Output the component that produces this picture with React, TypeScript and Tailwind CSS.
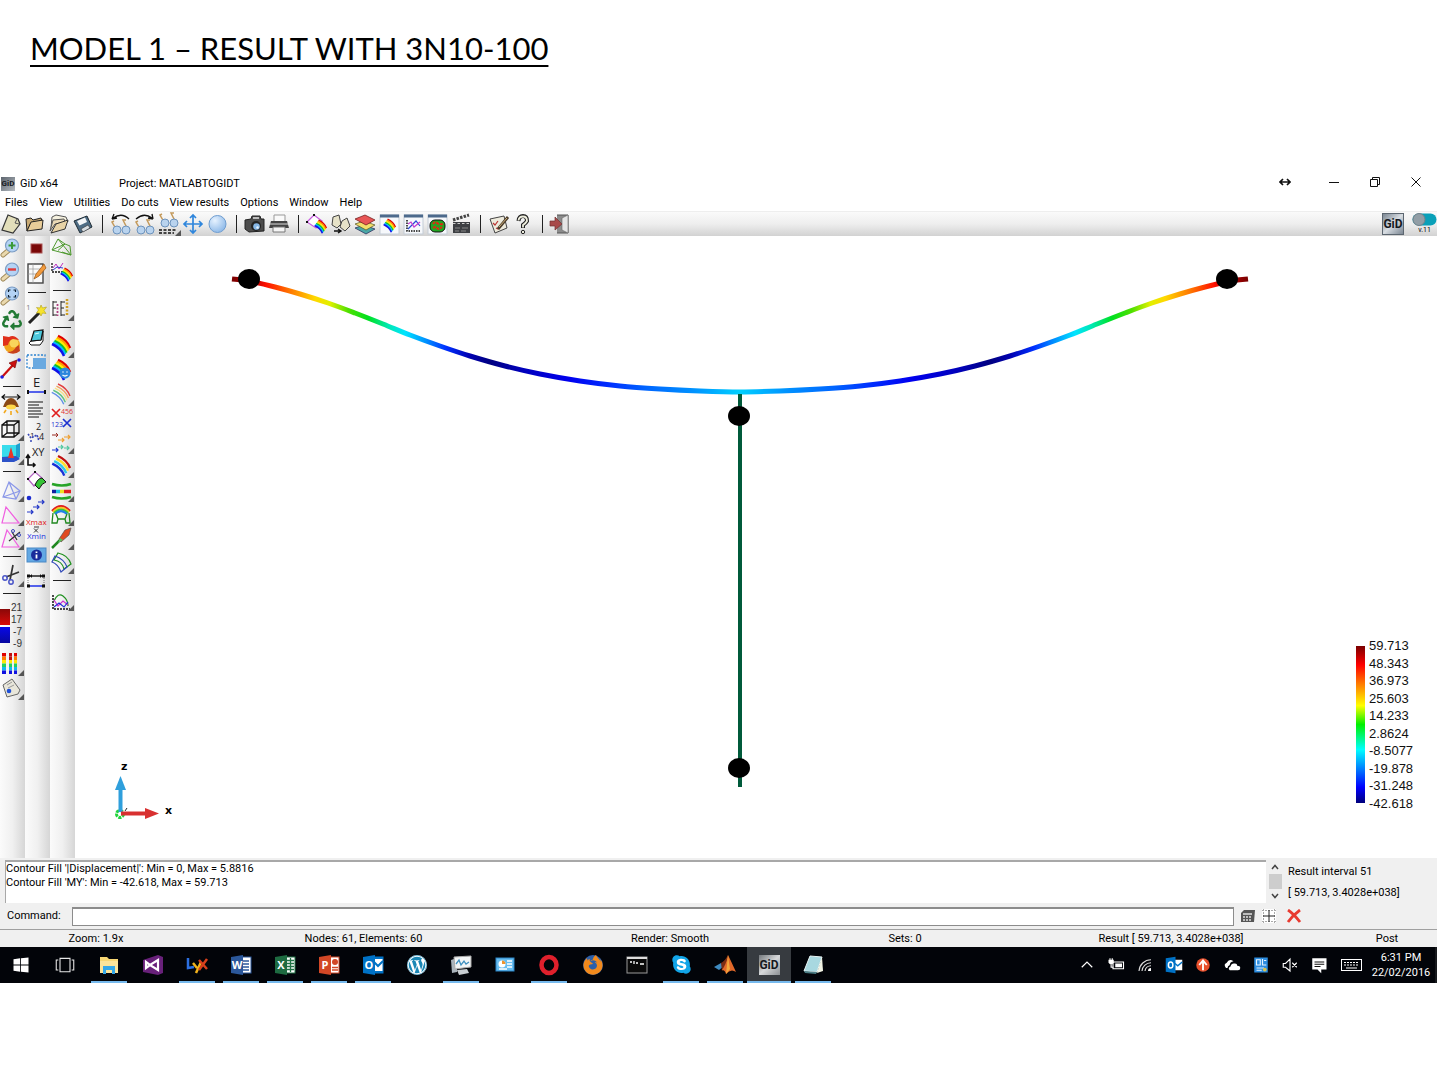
import type { ReactNode } from 'react'
import clsx from 'clsx'
import { FaRecycle, FaSkype, FaWordpress, FaFirefoxBrowser } from 'react-icons/fa'

type Tool = { name: string; icon: ReactNode; more?: boolean } | 'sep'

const RAINBOW = ['#e00000', '#ff9d00', '#ffee00', '#12c020', '#00b8ff', '#1010e8']

function Svg({ children, size = 24 }: { children: ReactNode; size?: number }) {
  return (
    <svg width={size} height={size} viewBox="0 0 24 24" fill="none" aria-hidden="true">
      {children}
    </svg>
  )
}

// Diagonal band of parallel arcs, outer colour first
function Rainbow({ step = 2, colors = RAINBOW }: { step?: number; colors?: string[] }) {
  return (
    <>
      {colors.map((c, i) => {
        const d = i * step
        return (
          <path
            key={i}
            d={`M${10 - d * 0.6} ${2 + d * 0.8} q9 4 12 12`}
            stroke={c}
            strokeWidth={step > 3 ? 2.4 : step > 2 ? 1.4 : 2.5}
          />
        )
      })}
    </>
  )
}

function Glasses({ y = 0 }: { y?: number }) {
  return (
    <g transform={`translate(0 ${y})`}>
      <path d="M7 17 L3 10 L5 9 M18 16 L14 8 L17 8" stroke="#c49a5c" strokeWidth="1.5" />
      <circle cx="8" cy="18" r="4" fill="#b9d3ee" stroke="#6d93bd" />
      <circle cx="17" cy="18" r="4" fill="#b9d3ee" stroke="#6d93bd" />
    </g>
  )
}

function Lens({ children }: { children: ReactNode }) {
  return (
    <Svg>
      <path d="M9 14 L3 19" stroke="#a08a5a" strokeWidth="5" strokeLinecap="round" />
      <path d="M9 14 L3 19" stroke="#ead9ae" strokeWidth="3" strokeLinecap="round" />
      <circle cx="12" cy="9.5" r="6.5" fill="#b4d3f5" stroke="#7b9cc4" strokeWidth="1.2" />
      {children}
    </Svg>
  )
}

function Glyph({ x, y, size = 8, fill, children }: { x: number; y: number; size?: number; fill: string; children: string }) {
  return (
    <text x={x} y={y} fontFamily="Open Sans, sans-serif" fontSize={size} fill={fill}>
      {children}
    </text>
  )
}

function GidLogo({ className }: { className: string }) {
  return (
    <span className={clsx('flex items-center justify-center font-["Roboto"] font-bold text-[#15191e]', className)}>
      GiD
    </span>
  )
}

const Pane = ({ children }: { children: ReactNode }) => (
  <Svg>
    <rect x="3" y="3" width="19" height="19" fill="#f6f8fb" stroke="#c3ccd6" />
    <rect x="3" y="2.5" width="19" height="3" fill="#4d6a8c" />
    {children}
  </Svg>
)

const topTools: Tool[] = [
  {
    name: 'New',
    icon: (
      <Svg>
        <path d="M9 3 L19 7 L21 12 L14 21 L3 18 Z" fill="#e2deba" stroke="#333" strokeWidth="1.2" />
        <path d="M18 7 L16 11 L20 12" stroke="#555" />
      </Svg>
    ),
  },
  {
    name: 'Open',
    icon: (
      <Svg>
        <path d="M4 19 L3 7 L8 6 L10 8 L18 6 L19 9 L8 11 Z" fill="#c9aa74" stroke="#222" />
        <path d="M4 19 L8 10 L20 8 L19 17 Z" fill="#e8cc98" stroke="#222" />
      </Svg>
    ),
  },
  {
    name: 'Import',
    icon: (
      <Svg>
        <path d="M4 16 L5 5 L9 3 L19 5 L21 10" fill="#f5f1df" stroke="#555" />
        <path d="M3 19 L6 8 L17 7 L18 10 L8 12 Z" fill="#ead9b5" stroke="#555" />
        <path d="M4 21 L9 12 L21 8 L18 17 Z" fill="#e8d3a6" stroke="#333" />
      </Svg>
    ),
  },
  {
    name: 'Save',
    icon: (
      <Svg>
        <path d="M3 9 L16 4 L21 15 L9 21 Z" fill="#4e6c84" stroke="#1d2a33" />
        <path d="M6 9 L14 5.500 L16 10 L8.500 13.500 Z" fill="#f4f6f8" />
        <path d="M10 17 L17 13 L19 16 L12 20 Z" fill="#d7dde2" stroke="#333" strokeWidth=".6" />
      </Svg>
    ),
  },
  'sep',
  {
    name: 'Undo view',
    icon: (
      <Svg>
        <Glasses />
        <path d="M4 6 Q13 0 20 7 M3 7 L5 2 M3 7 L8 6" stroke="#111" strokeWidth="1.3" />
      </Svg>
    ),
  },
  {
    name: 'Redo view',
    icon: (
      <Svg>
        <Glasses />
        <path d="M3 7 Q11 0 19 6 M20 7 L19 2 M20 7 L15 6" stroke="#111" strokeWidth="1.3" />
      </Svg>
    ),
  },
  {
    name: 'Saved views',
    more: true,
    icon: (
      <Svg>
        <Glasses y={-7} />
        <path d="M2 18 h18 M2 21 h15" stroke="#111" strokeDasharray="3 1.500" strokeWidth="1.3" />
      </Svg>
    ),
  },
  {
    name: 'Pan',
    icon: (
      <Svg>
        <path
          d="M12 3 V21 M3 12 H21 M9 6 L12 3 L15 6 M9 18 L12 21 L15 18 M6 9 L3 12 L6 15 M18 9 L21 12 L18 15"
          stroke="#2f86dc"
          strokeWidth="1.7"
        />
      </Svg>
    ),
  },
  {
    name: 'Render',
    icon: (
      <Svg>
        <defs>
          <radialGradient id="ball" cx=".35" cy=".3" r=".8">
            <stop offset="0" stopColor="#e6f2ff" />
            <stop offset="1" stopColor="#86b4e6" />
          </radialGradient>
        </defs>
        <circle cx="12.500" cy="12" r="8.500" fill="url(#ball)" stroke="#6f9dd0" />
      </Svg>
    ),
  },
  'sep',
  {
    name: 'Snapshot',
    icon: (
      <Svg>
        <path d="M2 8 L8 7 L9 4 H17 L18 7 H21 V19 L6 20 L2 17 Z" fill="#4c4c4c" stroke="#222" />
        <rect x="10" y="5" width="6" height="2" fill="#bbb" />
        <circle cx="13" cy="14" r="5" fill="#222" />
        <circle cx="13.500" cy="14.500" r="3.300" fill="#86b7e6" />
        <circle cx="14.500" cy="15.500" r="1.200" fill="#e6f4ff" />
      </Svg>
    ),
  },
  {
    name: 'Print',
    icon: (
      <Svg>
        <path d="M7 3 H18 V10 H7 Z" fill="#fafafa" stroke="#999" />
        <path d="M4 9 H20 L22 16 H2 Z" fill="#444" />
        <path d="M3 12 H21" stroke="#ddd" />
        <path d="M6 15 H18 V20 H6 Z" fill="#f5f5f5" stroke="#777" />
      </Svg>
    ),
  },
  'sep',
  {
    name: 'Postprocess',
    icon: (
      <Svg>
        <path d="M2 10 L9 3 L17 9 L11 16 Z" fill="#fff" stroke="#c75be0" strokeWidth="1.3" />
        <path d="M8 2 h2 v2 h-2z M1 9 h2 v2 h-2z" fill="#111" />
        <g transform="translate(7 7) scale(.65)">
          <Rainbow />
        </g>
      </Svg>
    ),
  },
  {
    name: 'Copy mesh',
    icon: (
      <Svg>
        <path d="M4 5 L10 3 L12 12 L8 16 L3 13 Z" fill="#e6e2c8" stroke="#444" />
        <path d="M13 9 L18 6 L21 14 L16 19 L11 15 Z" fill="#e6e2c8" stroke="#444" />
        <path d="M5 19 h6 M9 17 l3 2 l-3 2" stroke="#111" strokeWidth="1.4" />
      </Svg>
    ),
  },
  {
    name: 'Layers',
    icon: (
      <Svg>
        <path d="M2 16 L11 13 L22 17 L13 22 Z" fill="#4aa6a6" stroke="#225" strokeWidth=".7" />
        <path d="M2 12 L11 9 L22 13 L13 18 Z" fill="#f2de6a" stroke="#552" strokeWidth=".7" />
        <path d="M2 7 L12 3 L22 8 L13 13 Z" fill="#e85555" stroke="#611" strokeWidth=".7" />
      </Svg>
    ),
  },
  {
    name: 'Contour window',
    icon: (
      <Pane>
        <g transform="translate(4 6) scale(.65)">
          <Rainbow />
        </g>
      </Pane>
    ),
  },
  {
    name: 'Graph window',
    icon: (
      <Pane>
        <path d="M6 8 V19 H20" stroke="#111" strokeDasharray="1.500 1" strokeWidth="1.500" />
        <path d="M7 17 L12 12 L15 9 L19 14" stroke="#2a48d8" strokeWidth="1.200" />
        <path d="M7 12 L10 10 L13 15 L19 10" stroke="#c63bd0" strokeWidth="1.200" />
      </Pane>
    ),
  },
  {
    name: 'Result window',
    icon: (
      <Pane>
        <rect x="5" y="8" width="15" height="12" rx="5" fill="#22a522" stroke="#111" />
        <path d="M8 12 q2 -3 4 -1 t6 1 M8 16 q3 -2 4 0 t5 -1" stroke="#e02a10" strokeWidth="2" strokeDasharray="3 1" />
      </Pane>
    ),
  },
  {
    name: 'Animate',
    icon: (
      <Svg>
        <path d="M4 10 H21 V21 H4 Z" fill="#3d3f43" />
        <path d="M4 8 L20 3" stroke="#444" strokeWidth="3" strokeDasharray="2.500 1.200" />
        <path d="M4 11.500 H21" stroke="#ccc" strokeDasharray="2.500 2" />
        <path d="M6 16 h5 M13 16 h6 M6 19 h4 M12 19 h5" stroke="#888" />
      </Svg>
    ),
  },
  'sep',
  {
    name: 'Preferences',
    icon: (
      <Svg>
        <path d="M3 7 L17 4 L20 16 L8 21 Z" fill="#eeebdd" stroke="#444" />
        <path d="M6 11 l2 2 l3 -4 M9 16 l2 1 l2 -3" stroke="#b33" strokeWidth="1.200" />
        <path d="M21 5 L11 17" stroke="#4b3c2a" strokeWidth="2.800" />
        <path d="M20 6 L12 15" stroke="#cfb27c" strokeWidth="1" />
      </Svg>
    ),
  },
  {
    name: 'Help',
    icon: (
      <Svg>
        <path d="M7.500 9 Q8 4 12 4 T16 9 Q15 11 12 13 V16" stroke="#222" strokeWidth="4" />
        <path d="M7.500 8.500 Q8 4.500 12 4.500 T16 9 Q15 11 12 13 V15.500" stroke="#eeeede" strokeWidth="1.800" />
        <circle cx="12" cy="20" r="1.700" fill="#eeeede" stroke="#222" />
      </Svg>
    ),
  },
  'sep',
  {
    name: 'Exit',
    icon: (
      <Svg>
        <path d="M8 3 H19 V21 H8" fill="#8b8b8b" stroke="#555" />
        <path d="M13 6 L19 3 V21 L13 18 Z" fill="#e5e5e5" stroke="#666" strokeWidth=".6" />
        <path d="M1 9 H6 V5 L13 12 L6 18 V14 H1 Z" fill="#a84a4a" stroke="#703030" strokeWidth=".7" />
      </Svg>
    ),
  },
]

const viewTools: Tool[] = [
  { name: 'Zoom in', icon: <Lens><path d="M12 6 v7 M8.500 9.500 h7" stroke="#3a9a3a" strokeWidth="2" /></Lens> },
  { name: 'Zoom out', icon: <Lens><path d="M8 9.500 h8" stroke="#e03a3a" strokeWidth="2.400" /></Lens> },
  {
    name: 'Zoom frame',
    icon: (
      <Lens>
        <path d="M8.500 8 V6 H10.500 M13.500 6 H15.500 V8 M15.500 11 V13 H13.500 M10.500 13 H8.500 V11" stroke="#123" strokeWidth="1.200" />
      </Lens>
    ),
  },
  { name: 'Redraw', icon: <FaRecycle size={20} color="#237a35" /> },
  {
    name: 'Rotate',
    icon: (
      <Svg>
        <circle cx="12" cy="13" r="8" fill="#f2a51d" />
        <circle cx="14" cy="11" r="4.500" fill="#f9d65c" />
        <path d="M3 4 L9 5 Q14 2 19 8 L13 7 Q9 8 8 13 L3 14 Z" fill="#e0301c" />
        <path d="M19 13 L20 19 Q14 24 7 20 Q14 20 16 15 Z" fill="#c8401c" />
      </Svg>
    ),
  },
  {
    name: 'Pan two points',
    icon: (
      <Svg>
        <path d="M2 21 L13 9" stroke="#cc1010" strokeWidth="2.200" />
        <path d="M17 4 L15 12 L9 7 Z" fill="#cc1010" stroke="#600" strokeWidth=".6" />
        <circle cx="2" cy="21" r="1.800" fill="#2020e0" />
        <circle cx="19" cy="4" r="1.800" fill="#2020e0" />
      </Svg>
    ),
  },
  'sep',
  {
    name: 'Light',
    icon: (
      <Svg>
        <path d="M2 4 H20 M5 1.500 L2 4 L5 6.500 M17 1.500 L20 4 L17 6.500" stroke="#111" strokeWidth="1.200" />
        <path d="M3 14 Q6 5 11 5 T19 14 Z" fill="#8b4a16" />
        <ellipse cx="11" cy="14" rx="5" ry="2.500" fill="#ffd84a" />
        <path d="M6 17 l-2 3 M11 18 v4 M16 17 l2 3" stroke="#f2a81d" strokeWidth="1.600" />
      </Svg>
    ),
  },
  {
    name: 'Box view',
    more: true,
    icon: (
      <Svg>
        <path d="M2 8 H14 V20 H2 Z M7 4 H19 V16 H7 Z M2 8 L7 4 M14 8 L19 4 M14 20 L19 16 M2 20 L7 16" stroke="#111" strokeWidth="1.300" />
      </Svg>
    ),
  },
  {
    name: 'Perspective',
    more: true,
    icon: (
      <Svg>
        <path d="M2 4 H16 V20 H2 Z" fill="#39dcec" />
        <path d="M16 4 L20 2 V16 L16 20 Z" fill="#1e9fd0" />
        <path d="M2 16 L16 15 L20 18 L14 21 H2 Z" fill="#2d52c8" />
        <path d="M11 6 L14 17 H8 Z" fill="#e8342a" />
      </Svg>
    ),
  },
  'sep',
  {
    name: 'Volume style',
    more: true,
    icon: (
      <Svg>
        <path d="M9 4 L3 19 L16 21 L20 13 Z M9 4 L16 21 M3 19 L20 13" stroke="#8a97e8" strokeWidth="1.200" />
      </Svg>
    ),
  },
  {
    name: 'Surface style',
    more: true,
    icon: <Svg><path d="M6 5 L2 21 H19 Z" stroke="#f05fe0" strokeWidth="1.200" /></Svg>,
  },
  {
    name: 'Cut style',
    more: true,
    icon: (
      <Svg>
        <path d="M7 4 L2 21 H19 Z" stroke="#f05fe0" strokeWidth="1.200" />
        <path d="M9 15 L20 6 M12 6 L17 14" stroke="#333" strokeWidth="1.300" />
        <circle cx="19" cy="9" r="1.500" stroke="#3a48b8" />
        <circle cx="13" cy="5" r="1.500" stroke="#3a48b8" />
      </Svg>
    ),
  },
  'sep',
  {
    name: 'Cut plane',
    more: true,
    icon: (
      <Svg>
        <path d="M13 2 L10 17 M19 9 L6 14" stroke="#333" strokeWidth="1.700" />
        <circle cx="5" cy="15" r="2.200" stroke="#4a55c8" strokeWidth="1.500" />
        <circle cx="11" cy="19" r="2.200" stroke="#4a55c8" strokeWidth="1.500" />
      </Svg>
    ),
  },
  'sep',
]

const rangeTools: Tool[] = [
  {
    name: 'Colour scale',
    more: true,
    icon: (
      <Svg>
        {[2, 9, 14].map((x, i) => (
          <g key={x}>
            {['#e00000', '#ff7a00', '#ffe600', '#20d060', '#10b8f0', '#1010e0'].map((c, j) => (
              <rect key={c} x={x} y={1 + j * 3.5} width={i ? 3 : 4} height="3.500" fill={i === 1 && j < 2 ? '#c01010' : c} />
            ))}
          </g>
        ))}
      </Svg>
    ),
  },
  {
    name: 'Comments',
    more: true,
    icon: (
      <Svg>
        <path d="M3 9 L12 3 L20 14 L18 18 L7 21 Z" fill="#e8e6da" stroke="#666" />
        <path d="M7 9 L12 6 M8 12 L14 9" stroke="#999" />
        <circle cx="9" cy="15" r="2.300" fill="#1f50d8" />
      </Svg>
    ),
  },
]

const meshTools: Tool[] = [
  { name: 'Stop', icon: <Svg><rect x="6" y="8" width="11" height="9" fill="#7a0808" stroke="#a55" /></Svg> },
  {
    name: 'Edit notes',
    icon: (
      <Svg>
        <rect x="3" y="4" width="15" height="19" fill="#fafafa" stroke="#444" strokeWidth="1.400" />
        <path d="M3 9 h15 M3 14 h15 M8 4 v19" stroke="#999" strokeWidth=".7" />
        <path d="M19 4 L11 14 L9 19 L14 16 L21 8 Z" fill="#f29a3c" stroke="#94500f" strokeWidth=".7" />
      </Svg>
    ),
  },
  'sep',
  {
    name: 'Wand',
    icon: (
      <Svg>
        <Glyph x={1} y={9} fill="#888">1</Glyph>
        <path d="M4 22 L15 11" stroke="#222" strokeWidth="3" />
        <path d="M16 4 l1.500 3 l4 -1 l-2.500 3.500 l2 3 l-3.500 -.5 l-1.500 3 l-1.500 -3 l-3 0 l2 -3 l-2 -2.500 l3.500 .500 z" fill="#f7e32c" stroke="#b0a018" strokeWidth=".6" />
      </Svg>
    ),
  },
  {
    name: 'Erase',
    icon: (
      <Svg>
        <path d="M6 16 L16 15 L18 6 V16 L15 20 H6 L4 18 Z" fill="#fff" stroke="#111" />
        <path d="M9 6 L18 5 L16 15 L6 16 Z" fill="#4cc8dc" stroke="#111" strokeWidth="1.200" />
        <path d="M10 9 L14 8" stroke="#dff" />
      </Svg>
    ),
  },
  {
    name: 'Select box',
    icon: (
      <Svg>
        <rect x="2" y="6" width="18" height="13" stroke="#2b83d0" strokeWidth="1.300" strokeDasharray="2 1.500" />
        <rect x="8" y="9" width="13" height="11" fill="#6aa9e0" />
      </Svg>
    ),
  },
  {
    name: 'Entity labels',
    icon: (
      <Svg>
        <Glyph x={8} y={14} size={13} fill="#222">E</Glyph>
        <path d="M4 19 H19" stroke="#1f30e8" strokeWidth="1.500" />
        <path d="M3 17 v4 M20 17 v4" stroke="#111" strokeWidth="2" />
      </Svg>
    ),
  },
  { name: 'List', icon: <Svg><path d="M3 5 h15 M3 8 h11 M3 11 h15 M3 14 h13 M3 17 h15 M3 20 h11" stroke="#111" strokeWidth="1.200" /></Svg> },
  {
    name: 'Numbering',
    icon: (
      <Svg>
        <Glyph x={11} y={9} size={9} fill="#222">2</Glyph>
        <Glyph x={5} y={17} size={8} fill="#222">1</Glyph>
        <Glyph x={14} y={19} size={9} fill="#222">4</Glyph>
        <path d="M3 13 l3 4 l6 -3 l2 6 M5 20 h2" stroke="#3848b8" strokeDasharray="2 1" strokeWidth="1.600" />
      </Svg>
    ),
  },
  {
    name: 'Axes',
    icon: (
      <Svg>
        <Glyph x={7} y={11} size={11} fill="#222">XY</Glyph>
        <path d="M3 10 V20 H10 M1 13 L3 10 L5 13 M8 18 L10 20 L8 22" stroke="#111" strokeWidth="1.600" />
      </Svg>
    ),
  },
  {
    name: 'Surface',
    icon: (
      <Svg>
        <path d="M3 10 L10 3 L17 9 L9 17 Z" fill="#fff" stroke="#b060c0" strokeWidth="1.200" />
        <path d="M10 16 Q13 9 17 9 L21 13 Q17 14 14 20 Z" fill="#35c435" stroke="#111" />
        <path d="M2 9 h2 v2 h-2z M9 2 h2 v2 h-2z" fill="#111" />
      </Svg>
    ),
  },
  {
    name: 'Vectors',
    icon: (
      <Svg>
        <circle cx="4" cy="5" r="2.300" fill="#1c2cd0" />
        <path d="M2 19 h6 M6 17 l2 2 l-2 2 M8 14 h6 M12 12 l2 2 l-2 2 M13 9 h6 M17 7 l2 2 l-2 2" stroke="#2438c8" strokeWidth="1.200" />
      </Svg>
    ),
  },
  {
    name: 'Min max',
    icon: (
      <Svg>
        <Glyph x={1} y={8} size={8} fill="#e01818">Xmax</Glyph>
        <path d="M9 10 h5 M9 11.500 l4 4 M13 11.500 l-4 4" stroke="#333" />
        <Glyph x={2} y={22} size={8} fill="#2030e0">Xmin</Glyph>
      </Svg>
    ),
  },
  {
    name: 'Information',
    icon: (
      <Svg>
        <rect x="2" y="7" width="19" height="14" fill="#62a8e4" stroke="#4a88c4" />
        <circle cx="11.500" cy="14" r="5.500" fill="#1a2b9a" />
        <path d="M11.500 10.500 v1.500 M11.500 13.500 v4" stroke="#fff" strokeWidth="1.800" />
      </Svg>
    ),
  },
  {
    name: 'Dimensions',
    icon: (
      <Svg>
        <path d="M3 11 H19" stroke="#111" strokeWidth="1.400" />
        <path d="M2 9.500 h3 v3 h-3z M17 9.500 h3 v3 h-3z M7 9 v4 l-2 -2z M15 9 v4 l2 -2z" fill="#111" />
        <path d="M3 13 v8 M19 13 v8" stroke="#777" strokeDasharray="1 1" />
        <path d="M4 21 H18" stroke="#1f30e8" strokeWidth="1.500" />
        <path d="M2 19.500 h3 v3 h-3z M17 19.500 h3 v3 h-3z" fill="#111" />
      </Svg>
    ),
  },
]

const resultTools: Tool[] = [
  {
    name: 'Mesh',
    icon: (
      <Svg>
        <path d="M2 14 L8 3 L21 19 Z M2 14 L15 8 L8 3 M8 14.500 L15 8 L20 10 L21 19 L12 16" stroke="#4f9a30" strokeWidth="1" />
      </Svg>
    ),
  },
  {
    name: 'Graph result',
    icon: (
      <Svg>
        <path d="M2 3 V12 H13" stroke="#111" strokeWidth="1.300" strokeDasharray="2 1" />
        <path d="M3 8 L6 4 L9 9 L13 3" stroke="#c030c0" />
        <path d="M3 10 L7 7 L13 8" stroke="#3040d0" />
        <g transform="translate(8 7) scale(.65)"><Rainbow /></g>
      </Svg>
    ),
  },
  'sep',
  {
    name: 'Result table',
    more: true,
    icon: (
      <Svg>
        <path d="M3 4 V19 M3 5 h4 M3 11 h3 M3 18 h4 M11 4 V19 M11 5 h4 M11 11 h3 M11 18 h4" stroke="#222" />
        <path d="M7.500 7 v12" stroke="#b04080" strokeWidth="1.800" strokeDasharray="2 1.500" />
        <path d="M17 2 v16" stroke="#d0a020" strokeWidth="2.500" strokeDasharray="2 1.500" />
      </Svg>
    ),
  },
  'sep',
  { name: 'Contour fill', more: true, icon: <Svg><g transform="translate(-2 0)"><Rainbow /></g></Svg> },
  {
    name: 'Smooth contour',
    icon: (
      <Svg>
        <g transform="translate(-2 0)"><Rainbow /></g>
        <circle cx="15" cy="15" r="5.500" fill="#2c86dc" />
        <path d="M12.500 14 h1 M16.500 14 h1 M12.500 17 q2.500 2 5 0" stroke="#fff" strokeWidth="1.300" />
      </Svg>
    ),
  },
  {
    name: 'Contour lines',
    more: true,
    icon: <Svg><g transform="translate(-2 0)"><Rainbow step={2.6} colors={['#e04040', '#f0a060', '#f4e088', '#60c080', '#6090e8']} /></g></Svg>,
  },
  {
    name: 'Result values',
    icon: (
      <Svg>
        <path d="M2 3 L10 11 M10 3 L2 11" stroke="#e02020" strokeWidth="1.700" />
        <Glyph x={11} y={8} size={7} fill="#e03030">456</Glyph>
        <Glyph x={1} y={21} size={7} fill="#1c30d0">123</Glyph>
        <path d="M13 13 L21 21 M21 13 L13 21" stroke="#1c30d0" strokeWidth="1.700" />
      </Svg>
    ),
  },
  {
    name: 'Display vectors',
    more: true,
    icon: (
      <Svg>
        <path d="M2 5 h6 M6 3 l2 2 l-2 2" stroke="#9a2a20" />
        <path d="M14 7 h6 M18 5 l2 2 l-2 2 M8 10 h6 M12 8 l2 2 l-2 2" stroke="#f0a030" strokeWidth="1.200" />
        <path d="M8 17 h5 M11 15 l2 2 l-2 2 M14 18 h5 M17 16 l2 2 l-2 2" stroke="#50c8a0" strokeWidth="1.200" />
        <path d="M2 20 h6 M6 18 l2 2 l-2 2" stroke="#2038d0" strokeWidth="1.200" />
      </Svg>
    ),
  },
  {
    name: 'Iso surfaces',
    more: true,
    icon: <Svg><g transform="translate(-2 0)"><Rainbow step={3.2} colors={['#c01010', '#ffe030', '#30c8e8', '#1830d8']} /></g></Svg>,
  },
  {
    name: 'Stream lines',
    more: true,
    icon: (
      <Svg>
        <path d="M2 6 Q12 9 21 6 M2 19 Q12 22 21 19" stroke="#28a428" strokeWidth="2.600" />
        <path d="M2 13.500 h4" stroke="#1020a0" strokeWidth="3.500" />
        <path d="M6 13.500 h4" stroke="#20c0e0" strokeWidth="3.500" />
        <path d="M10 13.500 h4" stroke="#f0e020" strokeWidth="3.500" />
        <path d="M14 13.500 h7" stroke="#e02020" strokeWidth="3.500" />
      </Svg>
    ),
  },
  {
    name: 'Deformation',
    more: true,
    icon: (
      <Svg>
        {['#e02020', '#f8c820', '#38c838', '#2080e8'].map((c, i) => (
          <path key={c} d={`M${2 + i} ${9 + i} Q11 ${-1 + i * 2.4} ${20 - i} ${9 + i}`} stroke={c} strokeWidth="2" />
        ))}
        <path d="M3 11 L2 21 H7 L8 17 H15 L16 21 H20 L19 11 M8 17 L6 12 M15 17 L17 12" stroke="#208820" strokeWidth="1.300" />
      </Svg>
    ),
  },
  {
    name: 'Line diagram',
    more: true,
    icon: (
      <Svg>
        <path d="M2 22 L12 12" stroke="#208820" strokeWidth="2.500" />
        <path d="M9 13 L15 4 L21 2 L19 9 L11 16 Z" fill="#e04a20" stroke="#555" strokeWidth=".7" />
        <path d="M8 17 L10 12 L13 14 Z" fill="#58c060" />
      </Svg>
    ),
  },
  {
    name: 'Show deformed',
    more: true,
    icon: (
      <Svg>
        <path d="M8 3 Q18 5 21 14 L14 19 Q12 11 4 10 Z" stroke="#209020" strokeWidth="1.200" />
        <path d="M5 6 Q14 9 17 17 L11 22 Q8 14 2 12 Z" stroke="#3048b8" strokeWidth="1.200" />
      </Svg>
    ),
  },
  'sep',
  {
    name: 'Graphs',
    more: true,
    icon: (
      <Svg>
        <path d="M3 8 V22 H20" stroke="#111" strokeWidth="1.500" strokeDasharray="2 1" />
        <path d="M4 14 Q8 5 13 9 T18 19" stroke="#209020" strokeWidth="1.200" />
        <path d="M4 13 L8 19 L13 14 L18 18" stroke="#d030d0" strokeWidth="1.200" />
        <path d="M4 20 L9 16 L14 20 L18 15" stroke="#2030d8" strokeWidth="1.200" />
      </Svg>
    ),
  },
]

function ToolButton({ tool }: { tool: Exclude<Tool, 'sep'> }) {
  return (
    <button type="button" aria-label={tool.name} className="relative flex size-6 shrink-0 items-center justify-center">
      {tool.icon}
      {tool.more && (
        <svg className="absolute right-0 bottom-0" width="6" height="6" viewBox="0 0 6 6" aria-hidden="true">
          <path d="M6 0 V6 H0 Z" fill="#555" />
        </svg>
      )}
    </button>
  )
}

function SideTools({ tools, tall }: { tools: Tool[]; tall?: boolean }) {
  return (
    <>
      {tools.map((t, i) =>
        t === 'sep' ? (
          <div key={i} className={clsx('flex w-6 shrink-0 items-center justify-center', tall ? 'h-[17px]' : 'h-[13px]')}>
            <span className="h-px w-[18px] bg-[#222]" />
          </div>
        ) : (
          <ToolButton key={i} tool={t} />
        ),
      )}
    </>
  )
}

const sideColumn =
  'flex w-[25px] flex-col items-start bg-linear-to-r from-[#fbfbfb] via-[#f0f0f0] to-[#d6d6d6]'

// Half of the beam, measured from the symmetry axis at x = 740
const halfBeam = [
  [508, 279], [491, 281], [465, 287], [440, 294], [412, 303], [385, 313], [357, 324], [330, 335],
  [300, 346], [270, 356], [235, 366], [200, 374], [160, 381], [120, 386], [80, 389], [40, 391], [0, 392],
]
const beam = [
  ...halfBeam.map(([d, y]) => [740 - d, y]),
  ...halfBeam.slice(0, -1).reverse().map(([d, y]) => [740 + d, y]),
]
const beamPath = beam
  .map(([x, y], i) => {
    if (i === 0) return `M${x} ${y}`
    const [px, py] = beam[i - 1]
    const [bx, by] = beam[i - 2] ?? beam[i - 1]
    const [nx, ny] = beam[i + 1] ?? beam[i]
    return `C${px + (x - bx) / 6} ${py + (y - by) / 6} ${x - (nx - px) / 6} ${y - (ny - py) / 6} ${x} ${y}`
  })
  .join(' ')

const beamColors: [number, string][] = [
  [508, '#7a0000'], [485, '#c00000'], [474, '#ff1000'], [452, '#ff7000'], [425, '#ffd800'], [410, '#e0f000'],
  [392, '#50e000'], [372, '#00e020'], [352, '#00e8b0'], [335, '#00e4ff'], [314, '#0090ff'], [294, '#0030ff'],
  [270, '#0000b0'], [250, '#000080'], [220, '#0000b8'], [170, '#0000f0'], [130, '#0030ff'], [95, '#0064ff'],
  [45, '#0094ff'], [0, '#00d0ff'],
]
const beamStops = [
  ...beamColors.map(([d, c]) => [508 - d, c] as const),
  ...beamColors.slice(0, -1).reverse().map(([d, c]) => [508 + d, c] as const),
]

const nodes = [[249, 279], [1227, 279], [739, 416], [739, 768]]

const legend = ['59.713', '48.343', '36.973', '25.603', '14.233', '2.8624', '-8.5077', '-19.878', '-31.248', '-42.618']

function Viewport() {
  return (
    <main className="relative min-w-0 flex-1 bg-white">
      <svg className="block h-auto w-full" viewBox="75 236 1362 622" role="img" aria-label="Contour fill of MY">
        <defs>
          <linearGradient id="beam" gradientUnits="userSpaceOnUse" x1="232" x2="1248" y1="0" y2="0">
            {beamStops.map(([x, c], i) => (
              <stop key={i} offset={x / 1016} stopColor={c} />
            ))}
          </linearGradient>
        </defs>
        <path d={beamPath} fill="none" stroke="url(#beam)" strokeWidth="5" />
        <path d="M740 394 V787" stroke="#005a3a" strokeWidth="4" />
        {nodes.map(([x, y]) => (
          <ellipse key={`${x}-${y}`} cx={x} cy={y} rx="11" ry="10" fill="#000" />
        ))}

        <circle cx="120" cy="814" r="3.500" fill="#fff" stroke="#22d43c" strokeWidth="3" strokeDasharray="3 1" />
        <path d="M120.500 812 V788" stroke="#2f9fdc" strokeWidth="4" />
        <path d="M120.500 776 L126 790 H115 Z" fill="#2f9fdc" />
        <path d="M121 813.500 H147" stroke="#d83030" strokeWidth="4" />
        <path d="M159 813.500 L145 808 V819 Z" fill="#d83030" />
        <path d="M125 811 l2 -3" stroke="#222" />
        <g fontFamily="'DejaVu Sans', sans-serif" fontWeight="bold" fontSize="11" fill="#000">
          <text x="121" y="770">z</text>
          <text x="165" y="814">x</text>
        </g>
      </svg>
      <div className="absolute right-[20px] bottom-[46px] flex h-[175px] w-[61px] gap-1 font-['Liberation_Sans'] text-[13px] leading-[17px] text-[#111]">
        <div className="my-[9px] w-[9px] bg-[linear-gradient(#7a0000,#ff0000_12%,#ff7a00_24%,#ffff00_38%,#00f000_50%,#00ffff_66%,#0080ff_78%,#0000ff_90%,#00007a)]" />
        <ul className="flex flex-col justify-between">
          {legend.map((v) => (
            <li key={v}>{v}</li>
          ))}
        </ul>
      </div>
    </main>
  )
}

function Office({ letter, color, dark, children }: { letter: string; color: string; dark: string; children?: ReactNode }) {
  return (
    <Svg>
      <rect x="11" y="4" width="11" height="16" fill="#fff" stroke={color} />
      {children ?? <path d="M14 8 h6 M14 11 h6 M14 14 h6 M14 17 h6" stroke={color} strokeWidth="1.300" />}
      <path d="M2 4 L14 2 V22 L2 20 Z" fill={dark} />
      <text x="8" y="16" textAnchor="middle" fontFamily="Open Sans, sans-serif" fontWeight="bold" fontSize="11" fill="#fff">
        {letter}
      </text>
    </Svg>
  )
}

const apps: { name: string; icon: ReactNode; open?: boolean; active?: boolean }[] = [
  { name: 'Start', icon: <Svg size={20}><path d="M3 5 L11 4 V11.500 H3 Z M12 4 L21 3 V11.500 H12 Z M3 12.500 H11 V20 L3 19 Z M12 12.500 H21 V21 L12 20 Z" fill="#fff" /></Svg> },
  { name: 'Task view', icon: <Svg size={20}><path d="M6 4 H18 V20 H6 Z M4 6 H1.500 V18 H4 M20 6 H22.500 V18 H20" stroke="#e8e8e8" strokeWidth="1.300" /></Svg> },
  {
    name: 'File Explorer',
    open: true,
    icon: (
      <Svg>
        <path d="M3 4 H10 L12 6 H21 V20 H3 Z" fill="#f7d774" />
        <path d="M3 8 H21 V20 H3 Z" fill="#fbe49a" />
        <path d="M6 13 H18 V21 H15 V17 H9 V21 H6 Z" fill="#35a8e8" />
      </Svg>
    ),
  },
  {
    name: 'Visual Studio',
    icon: (
      <Svg>
        <path d="M2 7 L17 2 L22 4 V20 L17 22 L2 19 Z" fill="#68217a" />
        <path d="M5 9 V15 L9 12 L17 17 V7 L9 12 Z" stroke="#fff" strokeWidth="2.200" />
      </Svg>
    ),
  },
  {
    name: 'LyX',
    open: true,
    icon: (
      <Svg>
        <path d="M3 5 V15 L9 14" stroke="#2c6fe0" strokeWidth="2.500" />
        <path d="M8 10 L12 15 M16 9 L11 20" stroke="#f2b21c" strokeWidth="2.500" />
        <path d="M14 7 L22 16 M22 6 L14 17" stroke="#d8401c" strokeWidth="2.500" />
      </Svg>
    ),
  },
  { name: 'Word', open: true, icon: <Office letter="W" color="#2b579a" dark="#2b579a" /> },
  {
    name: 'Excel',
    open: true,
    icon: (
      <Office letter="X" color="#217346" dark="#1e6b41">
        <path d="M14 7.500 h7 M14 10.500 h7 M14 13.500 h7 M14 16.500 h7 M17.500 5 v14" stroke="#217346" strokeWidth="1.300" />
      </Office>
    ),
  },
  {
    name: 'PowerPoint',
    open: true,
    icon: (
      <Office letter="P" color="#d24726" dark="#d24726">
        <path d="M15 14.500 h6 M15 17 h6" stroke="#d24726" strokeWidth="1.300" />
        <circle cx="18" cy="9" r="3" fill="#d24726" />
      </Office>
    ),
  },
  {
    name: 'Outlook',
    open: true,
    icon: (
      <Office letter="O" color="#0072c6" dark="#0072c6">
        <path d="M12 8 L17 13 L22 8 M12 5 h10 M12 19 h10" stroke="#0072c6" strokeWidth="2" />
      </Office>
    ),
  },
  { name: 'WordPress', icon: <span className="rounded-full bg-white"><FaWordpress size={20} color="#1b87b5" /></span> },
  {
    name: 'Performance Monitor',
    open: true,
    icon: (
      <Svg>
        <path d="M2 7 L8 5 V19 L3 20 Z" fill="#aab4bc" />
        <path d="M5 4 L22 3 V14 L6 16 Z" fill="#f2f5f6" stroke="#aaa" />
        <path d="M7 11 L10 7 L12 12 L15 8 L17 11 L20 9" stroke="#3f90c0" strokeWidth="1.300" />
        <path d="M8 17 L18 16 L20 20 L10 22 Z" fill="#c8ced2" />
      </Svg>
    ),
  },
  {
    name: 'Control Panel',
    icon: (
      <Svg>
        <rect x="3" y="5" width="18" height="13" fill="#68bdf0" stroke="#2b86c8" />
        <circle cx="9" cy="11" r="3.500" fill="#fff" />
        <path d="M9 11 V7.500 A3.500 3.500 0 0 1 12.500 11 Z" fill="#f0932c" />
        <path d="M14 8 h5 M14 11 h5 M14 14 h5 M6 16 h8" stroke="#fff" strokeWidth="1.500" />
      </Svg>
    ),
  },
  { name: 'Opera', open: true, icon: <Svg><ellipse cx="12" cy="12" rx="7.500" ry="8" stroke="#e0202c" strokeWidth="4.500" /></Svg> },
  {
    name: 'Firefox',
    icon: (
      <span className="rounded-full bg-[#2c5fa8]">
        <FaFirefoxBrowser size={20} color="#f28a1c" />
      </span>
    ),
  },
  {
    name: 'Command Prompt',
    icon: (
      <Svg>
        <rect x="2" y="4" width="20" height="16" fill="#0a0a0a" stroke="#9a9a9a" />
        <path d="M2 5 H22" stroke="#ddd" strokeWidth="2" />
        <path d="M5 9 h2 M9 8 v3 M11 10 h2 M15 11 h4" stroke="#fff" strokeWidth="1.300" />
      </Svg>
    ),
  },
  { name: 'Skype', open: true, icon: <FaSkype size={21} color="#12a5e8" className="bg-[radial-gradient(circle,#fff_45%,transparent_46%)]" /> },
  {
    name: 'MATLAB',
    open: true,
    icon: (
      <Svg>
        <path d="M1 14 L8 10 L11 13 L6 17 Z" fill="#3e8ac0" />
        <path d="M8 10 Q12 8 15 2 L12 15 L9 18 Z" fill="#7a2c14" />
        <path d="M15 2 Q18 8 23 19 Q18 15 13 21 Q12 17 9 17 Q13 12 15 2 Z" fill="#e2692a" />
        <path d="M15 2 Q16 10 17 16 L13 21 Z" fill="#f4a83c" />
      </Svg>
    ),
  },
  {
    name: 'GiD',
    active: true,
    icon: <GidLogo className="h-5 w-[21px] bg-linear-to-br from-[#75797d] via-[#d6d8da] to-[#8c9094] text-[12px]" />,
  },
  {
    name: 'Notepad',
    open: true,
    icon: (
      <Svg>
        <path d="M9 3 L21 4 L16 19 L3 18 Z" fill="#a8d8e0" stroke="#e8f4f4" />
        <path d="M21 4 L22 18 L16 20 Z" fill="#f1f3e4" />
        <path d="M3 18 L16 19 L15 21 L4 20 Z" fill="#4a7c84" />
      </Svg>
    ),
  },
]

const tray = [
  { name: 'Hidden icons', icon: <Svg size={18}><path d="M5 15 L12 8 L19 15" stroke="#fff" strokeWidth="1.600" /></Svg> },
  { name: 'Battery', icon: <Svg size={18}><path d="M8 8 H22 V17 H8 Z" stroke="#fff" strokeWidth="1.500" /><path d="M11 10 H20 V15 H11 Z M2 5 h7 v4 l-2 2 h-3 l-2 -2 z" fill="#fff" /><path d="M4 3 v3 M7 3 v3 M5.500 11 v4 h3" stroke="#fff" strokeWidth="1.500" /></Svg> },
  { name: 'Network', icon: <Svg size={18}><path d="M4 20 A16 16 0 0 1 20 5 M8 20 A12 12 0 0 1 20 9 M12 20 A8 8 0 0 1 20 13" stroke="#ddd" strokeWidth="1.500" /><path d="M16 20 A4 4 0 0 1 20 16 V20 Z" fill="#fff" /></Svg> },
  { name: 'Outlook', icon: <Svg size={18}><rect x="12" y="5" width="11" height="14" fill="#fff" /><path d="M12 9 L17 13 L23 8" stroke="#0072c6" strokeWidth="2" /><path d="M1 3 L14 1 V23 L1 21 Z" fill="#0072c6" /><ellipse cx="7.500" cy="12" rx="3" ry="4" stroke="#fff" strokeWidth="2" /></Svg> },
  { name: 'Updater', icon: <Svg size={18}><circle cx="12" cy="12" r="9" fill="#e8502c" /><path d="M12 19 V7 M7 12 L12 6 L17 12" stroke="#fff" strokeWidth="2.500" /></Svg> },
  { name: 'OneDrive', icon: <Svg size={18}><path d="M4 16 Q0 11 5 9 Q8 3 14 7 Q9 8 9 12 Q6 13 6 16 Z M9 19 Q6 16 10 14 Q11 9 16 10 Q19 10 19 13 Q23 13 23 16 T20 19 Z" fill="#fff" /></Svg> },
  { name: 'Display', icon: <Svg size={18}><rect x="3" y="2" width="18" height="20" fill="#2d8de0" /><path d="M6 5 h5 v7 h-5z M14 4 v8 h5 M16 6 h3 M6 16 h10 M6 19 h7" stroke="#e6f4ff" strokeWidth="1.500" /><circle cx="17" cy="18" r="2.500" fill="#d8c450" /></Svg> },
  { name: 'Volume', icon: <Svg size={18}><path d="M3 10 H6 L12 4 V20 L6 15 H3 Z M15 9 L21 15 M21 9 L15 15" stroke="#fff" strokeWidth="1.500" /></Svg> },
  { name: 'Notifications', icon: <Svg size={18}><path d="M3 3 H22 V18 H15 V23 L10 18 H3 Z" fill="#fff" /><path d="M6 8 h13 M6 11 h13 M6 14 h8" stroke="#111" strokeWidth="1.500" /></Svg> },
]

function Taskbar() {
  return (
    <footer className="flex h-9 items-stretch justify-between border-r-2 border-[#17191d] bg-[#020409]">
      <nav aria-label="Applications" className="flex gap-2 pl-[3px]">
        {apps.map((a) => (
          <button
            key={a.name}
            type="button"
            aria-label={a.name}
            className={clsx(
              'flex items-center justify-center border-b-2 pt-px',
              a.active ? '-mx-1 w-11 bg-[#373b40]' : 'w-9',
              a.open || a.active ? 'border-[#76b9ed]' : 'border-transparent',
            )}
          >
            {a.icon}
          </button>
        ))}
      </nav>
      <div className="flex items-center">
        {tray.map((t) => (
          <button key={t.name} type="button" aria-label={t.name} className="flex w-[29px] justify-center">
            {t.icon}
          </button>
        ))}
        <button type="button" aria-label="Keyboard" className="flex w-9 justify-center">
          <svg width="21" height="12" viewBox="0 0 21 12" fill="none" aria-hidden="true">
            <rect x=".5" y=".5" width="20" height="11" stroke="#fff" />
            <path d="M3 3.500 h15 M3 6 h15" stroke="#fff" strokeDasharray="2 1" />
            <path d="M5 9 h11" stroke="#fff" />
          </svg>
        </button>
        <time className="mr-[2px] w-16 text-center leading-[15px] text-white">
          6:31 PM
          <br />
          22/02/2016
        </time>
      </div>
    </footer>
  )
}

const menus = ['Files', 'View', 'Utilities', 'Do cuts', 'View results', 'Options', 'Window', 'Help']
const status = ['Zoom: 1.9x', 'Nodes: 61, Elements: 60', 'Render: Smooth', 'Sets: 0', 'Result [ 59.713, 3.4028e+038]', 'Post']
const log = `Contour Fill '|Displacement|': Min = 0, Max = 5.8816
Contour Fill 'MY': Min = -42.618, Max = 59.713`

export default function App() {
  return (
    <div className="min-h-screen bg-white font-['Roboto',sans-serif] text-[11px] text-black">
      <h1 className="h-[175px] pt-7 pl-[30px] font-['Lato',sans-serif] text-[31px] leading-10">
        <span className="underline decoration-2 underline-offset-[5px]">MODEL 1 – RESULT WITH 3N10-100</span>
      </h1>

      <section>
        <header className="flex h-[18px] items-center justify-between">
          <div className="flex items-center">
            <GidLogo className="ml-px h-[14px] w-[14px] bg-linear-to-br from-[#5d656e] to-[#b6bcc2] text-[8px]" />
            <span className="ml-[5px] w-[99px]">GiD x64</span>
            <span>Project: MATLABTOGIDT</span>
          </div>
          <div className="flex items-center pr-[10px] pb-1">
            <svg className="mr-[22px]" width="12" height="12" viewBox="0 0 12 12" aria-hidden="true">
              <path d="M1 6 H11 M4 3 L1 6 L4 9 M8 3 L11 6 L8 9" stroke="#111" strokeWidth="1.700" fill="none" />
            </svg>
            <button type="button" aria-label="Minimize" className="flex w-[41px] justify-center">
              <svg width="10" height="10" viewBox="0 0 10 10"><path d="M0 5.500 H10" stroke="#111" /></svg>
            </button>
            <button type="button" aria-label="Restore" className="flex w-[41px] justify-center">
              <svg width="10" height="10" viewBox="0 0 10 10" fill="none">
                <path d="M.5 2.500 H7.500 V9.500 H.5 Z M2.500 2.500 V.5 H9.500 V7.500 H7.500" stroke="#111" />
              </svg>
            </button>
            <button type="button" aria-label="Close" className="ml-[10px] flex w-[22px] justify-center">
              <svg width="10" height="10" viewBox="0 0 10 10"><path d="M.5 .5 L9.500 9.500 M9.500 .5 L.5 9.500" stroke="#111" /></svg>
            </button>
          </div>
        </header>

        <nav aria-label="Menu" className="flex h-[18px] items-center gap-[11px] pt-[2px] pl-[5px]">
          {menus.map((m) => (
            <button key={m} type="button">{m}</button>
          ))}
        </nav>

        <div className="flex h-[25px] items-center justify-between border-t border-[#eee] bg-linear-to-b from-[#fafafa] via-[#eee] to-[#d2d2d2]">
          <div className="-ml-px flex items-center">
            {topTools.map((t, i) =>
              t === 'sep' ? (
                <div key={i} className="flex w-[14px] justify-center">
                  <span className="h-[18px] w-px bg-[#222]" />
                </div>
              ) : (
                <ToolButton key={i} tool={t} />
              ),
            )}
          </div>
          <div className="flex items-center gap-2">
            <GidLogo className="h-[22px] w-[22px] border border-[#5c6670] bg-linear-to-br from-[#7d8894] via-[#d8dde2] to-[#7d8894] text-[12px]" />
            <button type="button" aria-label="Version 11" className="flex w-[25px] flex-col items-center text-[7px] leading-[9px]">
              <svg width="25" height="13" viewBox="0 0 25 13" aria-hidden="true">
                <rect x=".5" y=".5" width="24" height="12" rx="6" fill="#0aa0b8" />
                <circle cx="7" cy="6.500" r="6" fill="#929ea6" stroke="#75828a" />
              </svg>
              v.11
            </button>
          </div>
        </div>

        <div className="flex">
          <aside className="flex">
            <div className={sideColumn}>
              <SideTools tools={viewTools} />
              <div className="flex h-[52px] w-6 items-center font-['Liberation_Sans'] text-[10px] leading-3 text-[#333]">
                <div className="flex w-[10px] flex-col gap-[2px]">
                  <span className="h-4 bg-linear-to-b from-[#8a0808] to-[#d80808]" />
                  <span className="h-4 bg-linear-to-b from-[#0808e8] to-[#0808a0]" />
                </div>
                <div className="w-3 text-right">
                  21
                  <br />
                  17
                  <br />
                  -7
                  <br />
                  -9
                </div>
              </div>
              <SideTools tools={rangeTools} />
            </div>
            <div className={sideColumn}>
              <SideTools tools={meshTools} tall />
            </div>
            <div className={sideColumn}>
              <SideTools tools={resultTools} />
            </div>
          </aside>
          <Viewport />
        </div>

        <div className="bg-[#f0f0f0]">
          <div className="flex h-[45px] pt-[2px] pl-[5px]">
            <textarea
              aria-label="Messages"
              readOnly
              value={log}
              className="block h-[43px] flex-1 resize-none overflow-hidden border-t-2 border-l border-[#a8a8a8] bg-white leading-[14px] outline-none"
            />
            <div className="flex w-[18px] flex-col items-center justify-between py-1">
              <svg width="8" height="6" viewBox="0 0 8 6" fill="none"><path d="M1 5 L4 1.500 L7 5" stroke="#444" strokeWidth="1.500" /></svg>
              <span className="h-[15px] w-[13px] bg-[#cdcdcd]" />
              <svg width="8" height="6" viewBox="0 0 8 6" fill="none"><path d="M1 1 L4 4.500 L7 1" stroke="#444" strokeWidth="1.500" /></svg>
            </div>
            <div className="w-[153px] pt-px pl-1 leading-[21px]">
              <p>Result interval 51</p>
              <p>[ 59.713, 3.4028e+038]</p>
            </div>
          </div>
          <div className="flex h-[26px] items-center pl-[7px]">
            <label htmlFor="command" className="w-[65px]">Command:</label>
            <input id="command" className="h-[19px] min-w-0 flex-1 border border-t-2 border-[#8c8c8c] bg-white px-1 outline-none" />
            <div className="flex w-[203px] items-center gap-[6px] pl-[6px]">
              <button type="button" aria-label="Calculator">
                <svg width="16" height="14" viewBox="0 0 16 14" fill="none">
                  <path d="M1 4 L4 1 H15 L14 13 H1 Z" fill="#555" />
                  <path d="M3 5 h9 M3 8 h2 M6 8 h2 M9 8 h2 M3 11 h2 M6 11 h2 M9 11 h2" stroke="#e0e0e0" strokeWidth="1.500" />
                </svg>
              </button>
              <button type="button" aria-label="Grid">
                <svg width="14" height="14" viewBox="0 0 14 14" fill="none">
                  <rect width="14" height="14" fill="#fff" />
                  <path d="M0 1.500 h14 M0 12.500 h14 M1.500 0 v14 M12.500 0 v14" stroke="#aaa" strokeDasharray="2 1" />
                  <path d="M7 1 V13 M1 7 H13" stroke="#222" />
                </svg>
              </button>
              <button type="button" aria-label="Cancel" className="ml-1">
                <svg width="16" height="14" viewBox="0 0 16 14" fill="none">
                  <path d="M2 1 Q8 5 14 13 M14 1 Q7 6 2 13" stroke="#e83a30" strokeWidth="2.800" />
                </svg>
              </button>
            </div>
          </div>
          <div className="grid h-[18px] grid-cols-[192fr_343fr_270fr_200fr_332fr_100fr] items-center border-t border-[#a0a0a0] pt-px text-center">
            {status.map((s) => (
              <span key={s}>{s}</span>
            ))}
          </div>
        </div>

        <Taskbar />
      </section>
    </div>
  )
}
